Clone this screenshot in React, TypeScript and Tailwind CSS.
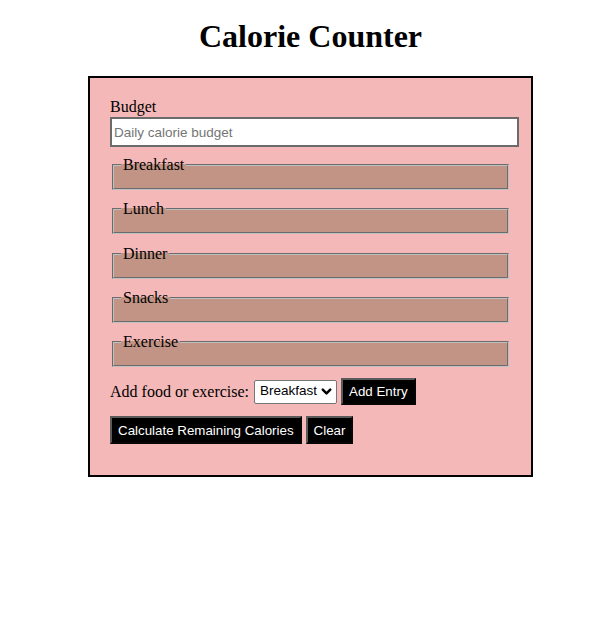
import { ChevronDown } from 'lucide-react'

const meals = ['Breakfast', 'Lunch', 'Dinner', 'Snacks', 'Exercise']

const serif = "font-['Liberation_Serif','Times_New_Roman',serif]"
const sans = "font-['Liberation_Sans',Arial,sans-serif]"

function Btn({ label, h }: { label: string; h: string }) {
  return (
    <button
      type="button"
      className={`${sans} ${h} flex items-center border-2 border-[#5a5a5a] [border-style:outset] bg-black px-[6px] text-[13.33px] leading-[15px] text-white`}
    >
      {label}
    </button>
  )
}

export default function App() {
  return (
    <div className={`${serif} min-h-[618px] bg-white text-black`}>
      <div className="ml-[88px] w-[445px] pt-[18px]">
        <h1 className="mb-[21px] text-center text-[32px] font-bold leading-[37px]">Calorie Counter</h1>

        <form className="box-border h-[401px] border-2 border-black bg-[#f4b8b8] px-[20px] pt-[19px]">
          <label htmlFor="budget" className="block text-[16px] leading-[19px]">
            Budget
          </label>
          <input
            id="budget"
            type="number"
            placeholder="Daily calorie budget"
            className={`${sans} mt-[1px] box-border block h-[30px] w-[409px] border-2 border-[#6b6b6b] bg-white px-[2px] text-[13.5px] placeholder:text-[#757575]`}
          />

          <div className="mt-[9px] flex flex-col gap-[10.25px]">
            {meals.map((m) => (
              <fieldset
                key={m}
                className="mx-[2px] border-2 border-[#c0c0c0] [border-style:groove] bg-[#c19485] pb-[10px] pl-[7px] pt-[4px]"
              >
                <legend className="px-[2px] text-[16px] leading-[18px]">{m}</legend>
              </fieldset>
            ))}
          </div>

          <div className="mt-[11px] flex items-center text-[16px]">
            <label htmlFor="entry-dropdown">Add food or exercise:</label>
            <div className="relative ml-[5px]">
              <select
                id="entry-dropdown"
                className={`${sans} box-border block h-[24px] w-[83px] appearance-none rounded-[2px] border border-[#767676] bg-white pl-[5px] pr-[18px] text-[13.5px] text-black`}
              >
                {meals.map((m) => (
                  <option key={m}>{m}</option>
                ))}
              </select>
              <ChevronDown
                size={15}
                strokeWidth={4}
                className="pointer-events-none absolute right-[3px] top-[4.5px] text-black"
              />
            </div>
            <div className="ml-[4px]">
              <Btn label="Add Entry" h="h-[27px]" />
            </div>
          </div>

          <div className="mt-[11px] flex gap-[4px]">
            <Btn label="Calculate Remaining Calories" h="h-[28px]" />
            <Btn label="Clear" h="h-[28px]" />
          </div>
        </form>
      </div>
    </div>
  )
}
